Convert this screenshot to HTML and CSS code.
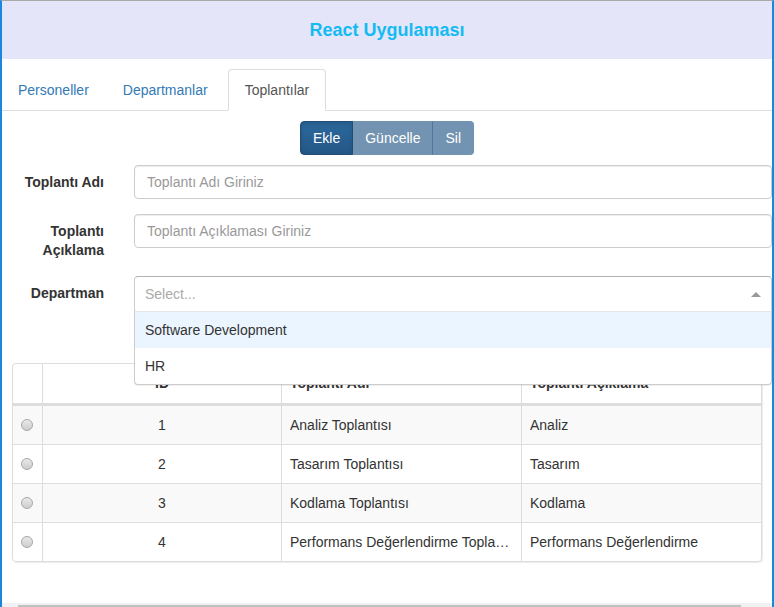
FILE: index.html
```html
<!DOCTYPE html>
<html lang="tr">
<head>
<meta charset="utf-8">
<title>React Uygulaması</title>
<link rel="stylesheet" href="styles.css">
</head>
<body>
<div class="frame">
  <div class="content">
    <header class="app-header">React Uygulaması</header>
    <ul class="nav-tabs">
      <li class="tab"><a class="tab-link">Personeller</a></li>
      <li class="tab"><a class="tab-link">Departmanlar</a></li>
      <li class="tab active"><a class="tab-link">Toplantılar</a></li>
    </ul>
    <div class="btn-row">
      <div class="btn-group">
        <button class="btn btn-active">Ekle</button>
        <button class="btn btn-dis">Güncelle</button>
        <button class="btn btn-dis">Sil</button>
      </div>
    </div>
    <div class="form-group">
      <label class="control-label">Toplantı Adı</label>
      <input class="form-control" type="text" placeholder="Toplantı Adı Giriniz">
    </div>
    <div class="form-group">
      <label class="control-label label-tall">Toplantı Açıklama</label>
      <input class="form-control" type="text" placeholder="Toplantı Açıklaması Giriniz">
    </div>
    <div class="form-group select-group">
      <label class="control-label">Departman</label>
      <div class="select">
        <div class="select-control">
          <span class="select-placeholder">Select...</span>
          <span class="select-arrow-zone"><span class="select-arrow"></span></span>
        </div>
        <div class="select-menu">
          <div class="select-option focused">Software Development</div>
          <div class="select-option">HR</div>
        </div>
      </div>
    </div>
    <div class="table-box">
      <table class="data-table">
        <thead>
          <tr>
            <th class="c-sel"></th>
            <th class="c-id">ID</th>
            <th class="c-name">Toplantı Adı</th>
            <th class="c-desc">Toplantı Açıklama</th>
          </tr>
        </thead>
        <tbody>
          <tr class="odd">
            <td class="c-sel"><span class="radio"></span></td>
            <td class="c-id">1</td>
            <td>Analiz Toplantısı</td>
            <td>Analiz</td>
          </tr>
          <tr>
            <td class="c-sel"><span class="radio"></span></td>
            <td class="c-id">2</td>
            <td>Tasarım Toplantısı</td>
            <td>Tasarım</td>
          </tr>
          <tr class="odd">
            <td class="c-sel"><span class="radio"></span></td>
            <td class="c-id">3</td>
            <td>Kodlama Toplantısı</td>
            <td>Kodlama</td>
          </tr>
          <tr>
            <td class="c-sel"><span class="radio"></span></td>
            <td class="c-id">4</td>
            <td>Performans Değerlendirme Toplantısı</td>
            <td>Performans Değerlendirme</td>
          </tr>
        </tbody>
      </table>
    </div>
  </div>
  <div class="hscroll"><div class="hscroll-thumb"></div></div>
</div>
</body>
</html>
```

FILE: styles.css
```css
* { box-sizing: border-box; }

html {
  background: #d6d6d6;
}

body {
  margin: 0;
  font-family: "Liberation Sans", Arial, sans-serif;
  font-size: 14px;
  line-height: 20px;
  color: #333;
}

.frame {
  width: 774px;
  height: 607px;
  background: #fff;
  border-left: 2px solid #1a86dd;
  border-right: 2px solid #1a86dd;
  border-top: 1px solid #a9a9a9;
  display: flex;
  flex-direction: column;
  overflow: hidden;
}

.content {
  flex: 1;
}

.app-header {
  height: 58px;
  background: #e4e5f9;
  color: #14bbf3;
  font-weight: bold;
  font-size: 18px;
  display: flex;
  align-items: center;
  justify-content: center;
}

.nav-tabs {
  list-style: none;
  margin: 10px 0 0;
  padding: 0;
  display: flex;
  border-bottom: 1px solid #ddd;
  height: 42px;
}

.tab {
  margin-right: 2px;
  margin-bottom: -1px;
}

.tab-link {
  display: block;
  padding: 10px 15px;
  line-height: 20px;
  color: #337ab7;
  border: 1px solid transparent;
  border-radius: 4px 4px 0 0;
}

.tab:nth-child(2) .tab-link {
  padding-right: 17px;
}

.tab.active .tab-link {
  color: #555;
  background: #fff;
  border-color: #ddd #ddd transparent;
  padding-left: 16px;
  padding-right: 16px;
}

.btn-row {
  display: flex;
  justify-content: center;
  margin: 10px 0 10px;
}

.btn-group {
  display: flex;
}

.btn {
  font-family: inherit;
  font-size: 14px;
  line-height: 20px;
  padding: 6px 12px;
  color: #fff;
  border: 1px solid;
  margin: 0;
  height: 34px;
}

.btn + .btn {
  margin-left: -1px;
}

.btn-active {
  background: linear-gradient(to bottom, #2c699e, #245786);
  border-color: #204d74;
  border-radius: 4px 0 0 4px;
  box-shadow: inset 0 3px 5px rgba(0, 0, 0, .125);
  position: relative;
  z-index: 1;
}

.btn-dis {
  background: #7293b1;
  border-color: #7192b0;
}

.btn-dis + .btn-dis {
  border-left-color: #4f779f;
}

.btn-dis:last-child {
  border-radius: 0 4px 4px 0;
}

.form-group {
  display: grid;
  grid-template-columns: 102px 1fr;
  column-gap: 30px;
  margin-bottom: 15px;
  align-items: start;
}

.control-label {
  text-align: right;
  font-weight: bold;
  padding-top: 8px;
  line-height: 19px;
}

.label-tall {
  min-height: 47px;
}

.form-control {
  display: block;
  width: 100%;
  height: 34px;
  padding: 6px 12px;
  font-family: inherit;
  font-size: 14px;
  line-height: 20px;
  color: #555;
  border: 1px solid #ccc;
  border-radius: 4px;
  box-shadow: inset 0 1px 1px rgba(0, 0, 0, .075);
}

.form-control::placeholder {
  color: #999;
}

.select-group {
  margin-bottom: 0;
}

.select {
  position: relative;
}

.select-control {
  height: 36px;
  display: flex;
  align-items: center;
  border: 1px solid;
  border-color: #b3b3b3 #ccc #d9d9d9;
  border-radius: 4px 4px 0 0;
  background: #fff;
}

.select-placeholder {
  flex: 1;
  padding-left: 10px;
  color: #aaa;
}

.select-arrow-zone {
  width: 25px;
  padding-right: 10px;
  display: flex;
  justify-content: flex-end;
}

.select-arrow {
  width: 0;
  height: 0;
  border-style: solid;
  border-width: 0 5px 5px;
  border-color: transparent transparent #999;
}

.select-menu {
  position: absolute;
  top: 35px;
  left: 0;
  right: 0;
  z-index: 5;
  background: #fff;
  border: 1px solid #ccc;
  border-top-color: #e6e6e6;
  border-radius: 0 0 4px 4px;
  box-shadow: 0 1px 0 rgba(0, 0, 0, .06);
}

.select-option {
  padding: 8px 10px;
  line-height: 20px;
  color: #333;
}

.select-option.focused {
  background: #ebf5ff;
}

.table-box {
  margin: 51px 10px 0;
  border: 1px solid #ddd;
  border-radius: 4px;
  box-shadow: 1px 1px 1px rgba(0, 0, 0, .08);
  overflow: hidden;
}

.data-table {
  width: 100%;
  table-layout: fixed;
  border-collapse: separate;
  border-spacing: 0;
}

.data-table th,
.data-table td {
  white-space: nowrap;
  overflow: hidden;
  text-overflow: ellipsis;
  text-align: left;
}

.data-table th {
  padding: 9px 8px 10px;
  line-height: 20px;
  font-weight: bold;
  border-bottom: 2px solid #ddd;
}

.data-table td {
  padding: 9px 8px;
  line-height: 20px;
  border-top: 1px solid #ddd;
}

.data-table th + th,
.data-table td + td {
  border-left: 1px solid #ddd;
}

.data-table th.c-sel { width: 29px; }
.data-table th.c-id { width: 239px; }
.data-table th.c-name { width: 240px; }
.data-table th.c-desc { width: 240px; }

.data-table .c-id {
  text-align: center;
}

.data-table .c-sel {
  padding-left: 0;
  padding-right: 1px;
  text-align: center;
}

.data-table tr.odd td {
  background: #f9f9f9;
}

.radio {
  display: inline-block;
  width: 12px;
  height: 12px;
  border-radius: 50%;
  border: 1px solid #a8a8a8;
  background: linear-gradient(to bottom, #e9e9e9, #cdcdcd);
  vertical-align: middle;
  margin-top: -3px;
}

.hscroll {
  height: 4px;
  background: #f1f1f1;
  padding-left: 16px;
  padding-right: 31px;
  padding-top: 2px;
}

.hscroll-thumb {
  height: 2px;
  background: #c1c1c1;
}
```
